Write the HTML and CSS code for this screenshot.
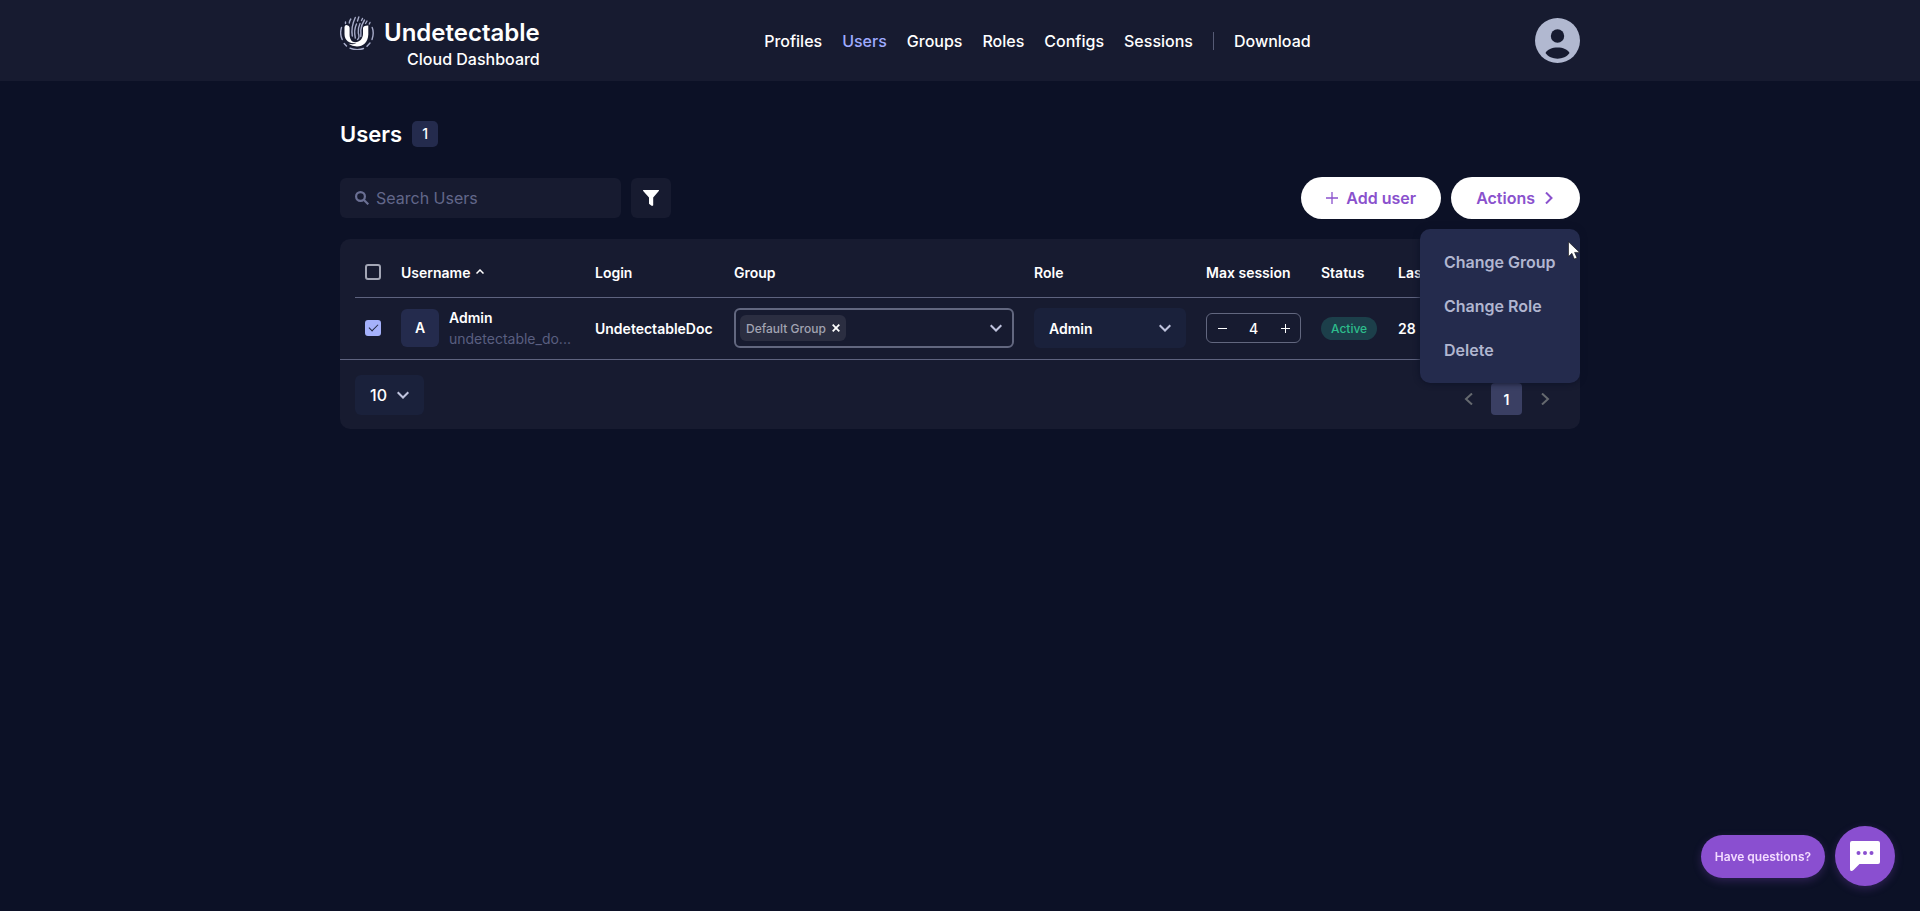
FILE: index.html
```html
<!DOCTYPE html>
<html lang="en">
<head>
<meta charset="utf-8">
<title>Undetectable Cloud Dashboard</title>
<link rel="stylesheet" href="styles.css">
</head>
<body>
<header class="topbar">
  <div class="container topbar-inner">
    <a class="brand" href="#">
      <svg class="brand-mark" viewBox="0 0 34 34" fill="none" stroke-linecap="round">
        <g stroke="#a6abc8" stroke-width="1.4">
          <path d="M2.200 23.500C.5 20 .4 15 1.500 11.500M32.200 11.500C33.600 15 33.400 19.500 32 23.500M4.200 27.500L6.500 30M10 32.200Q17 35 23.500 32.500M27 30.300L30 27"/>
          <path d="M5.500 7.500V6M9.300 7Q9.500 5 10.800 3M12.300 20Q10.800 11 15.300 1.500M15.300 22Q13.600 14 16.500 8M17.500 5L18.800 1M17.500 23.500Q20 22 18.300 17Q17.800 12 20 7.500M21.500 4.500L22.500 2.500M20.800 20.500Q21 17 20.800 14Q21.200 9 24.500 4M25.500 7.500L27 5M29.300 8L30 6.500"/>
        </g>
        <path fill="#fff" d="M4.500 11Q4.700 9 6.500 9Q9.600 9.500 9.600 12V19C9.800 24 12.500 26.500 15.500 26.200C19.500 26 22.800 23 23 18V12Q23.200 9.300 28.300 9.500V18.500C28 26.500 23 30.500 17 30.500Q12 30.300 8.500 27.800Q13 28.800 16.500 27.500C9 27.500 4.500 24.500 4.500 18Z"/>
      </svg>
      <span class="brand-name">Undetectable</span>
      <span class="brand-sub">Cloud Dashboard</span>
    </a>
    <nav class="nav">
      <a href="#">Profiles</a>
      <a class="active" href="#">Users</a>
      <a href="#">Groups</a>
      <a href="#">Roles</a>
      <a href="#">Configs</a>
      <a href="#">Sessions</a>
      <span class="nav-divider"></span>
      <a href="#">Download</a>
    </nav>
    <button class="avatar-button" type="button" aria-label="Account">
      <svg viewBox="0 0 45 45"><circle cx="22.500" cy="22.500" r="22.500" fill="#b1b8d0"/><circle cx="22.500" cy="18" r="6.700" fill="#171b30"/><path fill="#171b30" d="M10.500 35C13.500 27.500 31.500 27.500 34.500 35C29.500 42.500 15.500 42.500 10.500 35Z"/></svg>
    </button>
  </div>
</header>

<main class="container main">
  <div class="title-row">
    <h1>Users</h1>
    <span class="count">1</span>
  </div>

  <div class="toolbar">
    <label class="search">
      <svg class="icon-14" viewBox="0 0 14 14" fill="none" stroke="#6b7094" stroke-width="2.200"><circle cx="5.500" cy="5.500" r="4.400"/><path d="M9 9L13.300 13.300"/></svg>
      <input type="search" placeholder="Search Users" aria-label="Search Users">
    </label>
    <button class="filter" type="button" aria-label="Filter">
      <svg class="icon-16" viewBox="0 0 16 16"><path fill="#fff" d="M.3 0H15.700Q16.300.5 15.800 1L10.200 7.500V15.200Q10 16.200 8.500 15.700L6 13.800V7.500L.2 1Q-.2.4.3 0Z"/></svg>
    </button>
    <div class="toolbar-actions">
      <button class="pill-button" type="button">
        <svg class="icon-12" viewBox="0 0 12 12" stroke="#8a51cd" stroke-width="1.300"><path d="M6 0V12M0 6H12"/></svg>
        Add user
      </button>
      <div class="menu-anchor">
        <button class="pill-button" type="button" aria-expanded="true">
          Actions
          <svg class="icon-12" viewBox="0 0 12 12" fill="none" stroke="#8a51cd" stroke-width="2"><path d="M3 .5L8.500 6L3 11.500"/></svg>
        </button>
        <div class="menu" role="menu">
          <button type="button" role="menuitem">Change Group</button>
          <button type="button" role="menuitem">Change Role</button>
          <button type="button" role="menuitem">Delete</button>
          <svg class="pointer" viewBox="0 0 12 19"><path fill="#fff" stroke="#111" stroke-width=".6" d="M.5.800V15.500L3.900 12.300L6.300 18L9 16.900L6.600 11.400H11.600Z"/></svg>
        </div>
      </div>
    </div>
  </div>

  <section class="card">
    <div class="table-wrap">
      <table>
        <colgroup>
          <col class="col-check"><col class="col-user"><col class="col-login"><col class="col-group"><col class="col-role"><col class="col-max"><col class="col-status"><col>
        </colgroup>
        <thead>
          <tr>
            <th class="cell-check"><input type="checkbox" aria-label="Select all"></th>
            <th>Username <svg class="sort" viewBox="0 0 8 5" fill="none" stroke="#fff" stroke-width="1.500"><path d="M.5 4.500L4 1L7.500 4.500"/></svg></th>
            <th>Login</th>
            <th>Group</th>
            <th>Role</th>
            <th>Max session</th>
            <th>Status</th>
            <th>Last</th>
          </tr>
        </thead>
        <tbody>
          <tr>
            <td class="cell-check"><input type="checkbox" aria-label="Select Admin" checked></td>
            <td>
              <div class="user">
                <span class="initial">A</span>
                <div class="user-text"><span>Admin</span><span class="user-email">undetectable_do...</span></div>
              </div>
            </td>
            <td>UndetectableDoc</td>
            <td>
              <div class="multi">
                <span class="chip">Default Group
                  <button type="button" aria-label="Remove Default Group"><svg viewBox="0 0 8 8" stroke="#fff" stroke-width="1.800"><path d="M.7.700L7.300 7.300M7.300.700L.7 7.300"/></svg></button>
                </span>
                <button class="multi-toggle" type="button" aria-label="Choose groups"><svg class="icon-12" viewBox="0 0 12 12" fill="none" stroke="#bfc3dd" stroke-width="2"><path d="M.7 3.200L6 8.500L11.300 3.200"/></svg></button>
              </div>
            </td>
            <td>
              <div class="select select-role">
                <select aria-label="Role"><option>Admin</option></select>
                <svg class="icon-12 caret" viewBox="0 0 12 12" fill="none" stroke="#bfc3dd" stroke-width="2"><path d="M.7 3.200L6 8.500L11.300 3.200"/></svg>
              </div>
            </td>
            <td>
              <div class="stepper">
                <button type="button" aria-label="Decrease"><svg viewBox="0 0 9 9" stroke="#fff" stroke-width="1"><path d="M0 4.500H9"/></svg></button>
                <input type="text" value="4" aria-label="Max session">
                <button type="button" aria-label="Increase"><svg viewBox="0 0 9 9" stroke="#fff" stroke-width="1"><path d="M0 4.500H9M4.500 0V9"/></svg></button>
              </div>
            </td>
            <td><span class="status">Active</span></td>
            <td>28</td>
          </tr>
        </tbody>
      </table>
    </div>
    <div class="card-footer">
      <div class="select select-size">
        <select aria-label="Rows per page"><option>10</option></select>
        <svg class="icon-12 caret" viewBox="0 0 12 12" fill="none" stroke="#bfc3dd" stroke-width="2"><path d="M.7 3.200L6 8.500L11.300 3.200"/></svg>
      </div>
      <div class="pagination">
        <button type="button" aria-label="Previous page"><svg class="icon-12" viewBox="0 0 12 12" fill="none" stroke="#65696f" stroke-width="2"><path d="M9 .5L3 6L9 11.500"/></svg></button>
        <button class="current" type="button">1</button>
        <button type="button" aria-label="Next page"><svg class="icon-12" viewBox="0 0 12 12" fill="none" stroke="#65696f" stroke-width="2"><path d="M3 .5L9 6L3 11.500"/></svg></button>
      </div>
    </div>
  </section>
</main>

<div class="chat">
  <button class="chat-label" type="button">Have questions?</button>
  <button class="chat-button" type="button" aria-label="Open chat">
    <svg viewBox="0 0 30 30"><path fill="#fff" d="M2 0H28Q30 0 30 2V21Q30 23 28 23H9.500L3.500 29Q0 31.500 0 28V2Q0 0 2 0Z"/><g fill="#8a4fd0"><circle cx="8.500" cy="12" r="2"/><circle cx="15" cy="12" r="2"/><circle cx="21.500" cy="12" r="2"/></g></svg>
  </button>
</div>
</body>
</html>
```
FILE: styles.css
```css
* { box-sizing: border-box; }
body {
  margin: 0;
  min-height: 100vh;
  background: #0c1126;
  color: #fff;
  font-family: Inter, "Liberation Sans", sans-serif;
  font-size: 14px;
  font-weight: 600;
}
button, input, select { font: inherit; color: inherit; }
button { border: 0; padding: 0; background: none; cursor: pointer; }
svg { display: block; flex: none; }
a { color: inherit; text-decoration: none; }

.icon-12 { width: 12px; height: 12px; }
.icon-14 { width: 14px; height: 14px; }
.icon-16 { width: 16px; height: 16px; }

.container { width: 100%; max-width: 1240px; margin: 0 auto; }

.topbar { background: #171b30; }
.topbar-inner {
  display: flex;
  justify-content: space-between;
  align-items: center;
  height: 81px;
}
.brand {
  display: grid;
  grid-template-columns: 34px auto;
  column-gap: 10px;
  align-items: center;
}
.brand-mark { width: 34px; height: 34px; }
.brand-name { font-size: 24px; font-weight: 600; line-height: 36px; }
.brand-sub { grid-column: 1 / -1; text-align: right; font-size: 16px; font-weight: 500; line-height: 16px; }
.nav { display: flex; align-items: center; gap: 20px; font-size: 16px; font-weight: 500; }
.nav .active { color: #9fabff; }
.nav-divider { width: 1px; height: 18px; background: #565b75; }
.avatar-button { width: 45px; height: 45px; }

.main { padding-top: 40px; }
.title-row { display: flex; align-items: center; gap: 10px; }
h1 { margin: 0; font-size: 22px; line-height: 26px; font-weight: 600; }
.count {
  width: 26px;
  border-radius: 5px;
  background: #242b4d;
  line-height: 26px;
  text-align: center;
  font-weight: 500;
}

.toolbar { display: flex; align-items: center; margin: 30px 0 20px; }
.search {
  display: flex;
  align-items: center;
  gap: 7px;
  width: 281px;
  height: 40px;
  margin-right: 10px;
  padding: 0 15px;
  border-radius: 6px;
  background: #171b30;
}
.search input { flex: 1; min-width: 0; border: 0; padding: 0; background: none; font-size: 16px; font-weight: 400; }
.search input::placeholder { color: #62678a; opacity: 1; }
.filter { display: grid; place-items: center; width: 40px; height: 40px; border-radius: 6px; background: #171b30; }
.toolbar-actions { display: flex; gap: 10px; margin-left: auto; }
.pill-button {
  display: flex;
  align-items: center;
  gap: 8px;
  height: 42px;
  padding: 0 25px;
  border-radius: 21px;
  background: #fff;
  color: #8a51cd;
  font-size: 16px;
}
.menu-anchor { position: relative; }
.menu {
  position: absolute;
  z-index: 2;
  top: 52px;
  right: 0;
  display: flex;
  flex-direction: column;
  width: 160px;
  padding: 11px 0;
  border-radius: 10px;
  background: #242b4d;
  box-shadow: 0 0 6px #0c1126;
}
.menu button { padding-left: 24px; text-align: left; font-size: 16px; line-height: 44px; color: #b1b6d0; white-space: nowrap; }
.pointer { position: absolute; top: 12px; right: 0; width: 12px; height: 19px; }

.card { border-radius: 10px; background: #171b30; }
.table-wrap { padding: 0 15px; }
table { width: 100%; table-layout: fixed; border-collapse: collapse; }
.col-check { width: 46px; }
.col-user { width: 194px; }
.col-login { width: 139px; }
.col-group { width: 300px; }
.col-role { width: 172px; }
.col-max { width: 115px; }
.col-status { width: 77px; }
th, td { padding: 0; text-align: left; font-weight: 600; white-space: nowrap; }
thead tr { height: 58px; }
thead { border-bottom: 1px solid #5e637f; }
th { padding-top: 9px; }
tbody tr { height: 62px; }
.cell-check { padding-left: 10px; }
.cell-check input {
  appearance: none;
  display: grid;
  place-items: center;
  width: 16px;
  height: 16px;
  margin: 0;
  border: 2px solid #a3a6b5;
  border-radius: 3px;
}
.cell-check input:checked { border-color: #a5b1fb; background: #a5b1fb; }
.cell-check input:checked::before {
  content: "";
  width: 8px;
  height: 4px;
  margin-bottom: 3px;
  border: solid #20263f;
  border-width: 0 0 1px 1px;
  transform: rotate(-45deg);
}
.sort { display: inline-block; width: 8px; height: 5px; margin: 0 0 4px 2px; }
.user { display: flex; align-items: center; gap: 10px; }
.initial { width: 38px; border-radius: 6px; background: #242b4d; line-height: 38px; text-align: center; }
.user-text { display: flex; flex-direction: column; line-height: 21px; }
.user-email { color: #5a5f80; font-weight: 400; }

.multi {
  display: flex;
  align-items: center;
  justify-content: space-between;
  width: 280px;
  height: 40px;
  padding: 0 10px 0 4px;
  border: 2px solid #62677f;
  border-radius: 6px;
}
.chip {
  display: flex;
  align-items: center;
  gap: 6px;
  height: 26px;
  padding: 0 6px;
  border-radius: 6px;
  background: #2b2e41;
  color: #a2a4b2;
  font-size: 12px;
  font-weight: 500;
}
.chip svg { width: 8px; height: 8px; }
.select { position: relative; width: 152px; }
.select select {
  appearance: none;
  width: 100%;
  height: 40px;
  padding: 0 15px;
  border: 0;
  border-radius: 6px;
  background: #1a213b;
}
.caret { position: absolute; top: 14px; right: 15px; pointer-events: none; }
.stepper {
  display: flex;
  align-items: center;
  width: 95px;
  height: 30px;
  border: 1px solid #62677f;
  border-radius: 6px;
}
.stepper button { display: grid; place-items: center; width: 30px; height: 28px; }
.stepper svg { width: 9px; height: 9px; }
.stepper input { flex: 1; width: 0; border: 0; padding: 0; background: none; text-align: center; font-weight: 500; }
.status {
  display: inline-block;
  padding: 0 10px;
  border-radius: 12px;
  background: #1c3f4a;
  color: #2dbd8c;
  font-size: 12px;
  font-weight: 500;
  line-height: 23px;
}

.card-footer {
  display: flex;
  align-items: flex-start;
  justify-content: space-between;
  padding: 15px 15px 14px;
  border-top: 1px solid #5e637f;
}
.select-size { width: 69px; }
.select-size select { font-size: 16px; font-weight: 500; }
.pagination { display: flex; gap: 7px; padding: 8px 5px 0 0; }
.pagination button { display: grid; place-items: center; width: 31px; height: 32px; border-radius: 4px; }
.pagination .current { background: #3a3f63; }

.chat { position: fixed; right: 25px; bottom: 25px; display: flex; align-items: center; gap: 10px; }
.chat-label {
  height: 43px;
  padding: 0 14px;
  border-radius: 22px;
  background: #8a4fd0;
  box-shadow: 0 3px 8px #8a4fd044;
  color: #f3dcff;
  font-size: 12px;
}
.chat-button {
  display: grid;
  place-items: center;
  width: 60px;
  height: 60px;
  border-radius: 50%;
  background: #8a4fd0;
  box-shadow: 0 3px 8px #8a4fd044;
}
.chat-button svg { width: 30px; height: 30px; }
```
